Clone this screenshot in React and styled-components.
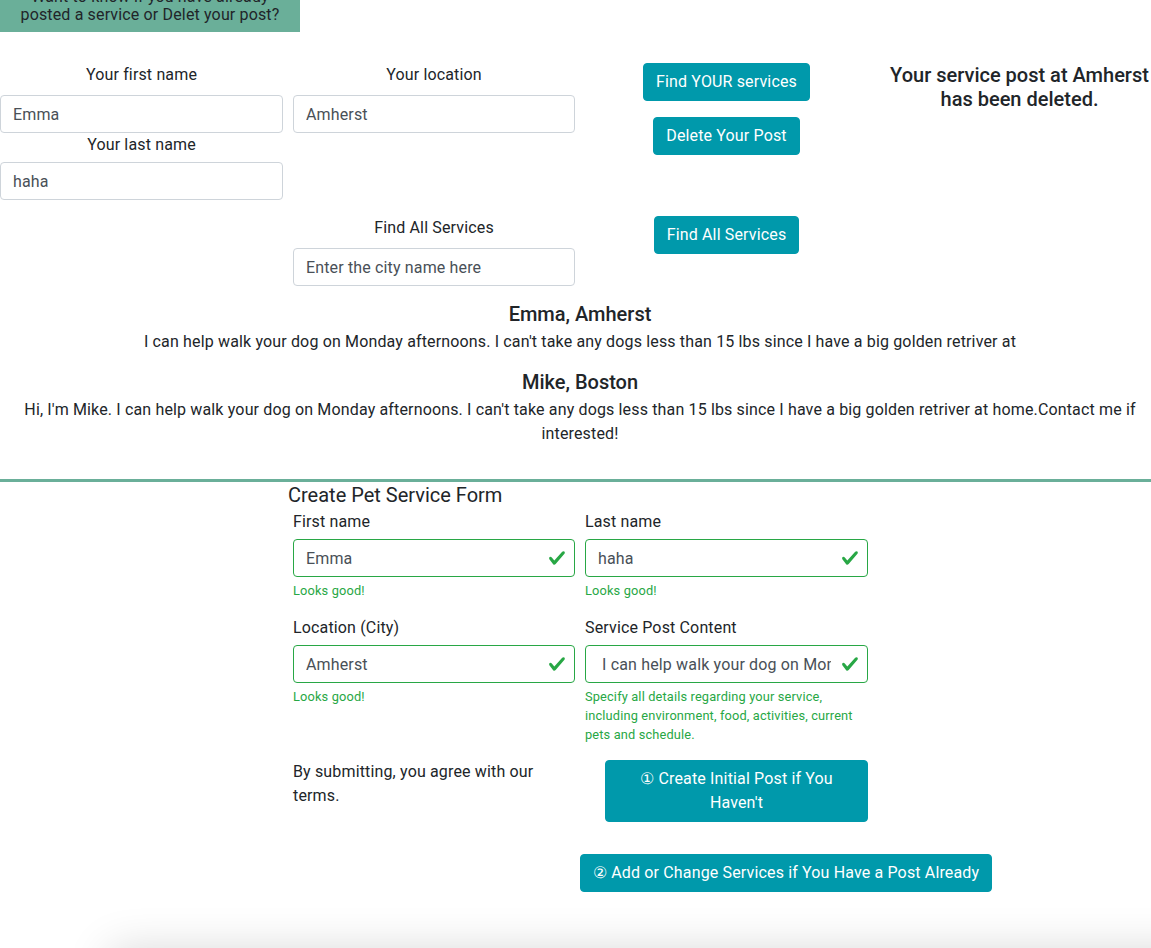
import React from "react";
import styled, { createGlobalStyle } from "styled-components";

const FONT = `Roboto, "Helvetica Neue", Arial, "Noto Sans", sans-serif`;

const Global = createGlobalStyle`
  html, body { margin: 0; padding: 0; background: #fff; }
  body {
    font-family: ${FONT};
    font-size: 16px;
    line-height: 1.5;
    letter-spacing: 0.15px;
    color: #212529;
    overflow: hidden;
  }
  * { box-sizing: border-box; }
`;

const Page = styled.div`
  width: 1151px;
  height: 948px;
  overflow: hidden;
  position: relative;
`;

const Banner = styled.div`
  width: 300px;
  margin-top: -19px;
  padding: 7px 10px 8px;
  background: #6aaf99;
  color: #212529;
  text-align: center;
  font-size: 16px;
  line-height: 18px;
`;

const Grid = styled.div`
  display: grid;
  grid-template-columns: 283px 282px 283px 283px;
  column-gap: 10px;
  margin-top: ${(p) => p.$top || 0}px;
`;

const Col = styled.div`
  display: flex;
  flex-direction: column;
  align-items: ${(p) => (p.$center ? "center" : "stretch")};
  gap: ${(p) => p.$gap || 0}px;
`;

const Label = styled.label`
  display: block;
  text-align: ${(p) => (p.$left ? "left" : "center")};
  line-height: 24px;
  margin-bottom: ${(p) => (p.$mb !== undefined ? p.$mb : 8)}px;
`;

const Input = styled.input`
  display: block;
  width: 100%;
  height: 38px;
  padding: 6px 12px;
  font-family: ${FONT};
  font-size: 16px;
  line-height: 24px;
  letter-spacing: 0.15px;
  color: #495057;
  background: #fff;
  border: 1px solid ${(p) => (p.$valid ? "#28a745" : "#ced4da")};
  border-radius: 4px;
  padding-right: ${(p) => (p.$valid ? 36 : 12)}px;
  outline: none;
  &::placeholder { color: #495057; opacity: 1; }
`;

const Button = styled.button`
  display: inline-block;
  font-family: ${FONT};
  font-size: 16px;
  font-weight: 400;
  line-height: 24px;
  letter-spacing: 0.15px;
  color: #fff;
  background: #0099ab;
  border: 1px solid #0099ab;
  border-radius: 4px;
  padding: 6px 12px;
  text-align: center;
  cursor: pointer;
`;

const Notice = styled.h5`
  margin: 0;
  font-size: 20px;
  font-weight: 500;
  line-height: 24px;
  letter-spacing: 0;
  text-align: center;
`;

const Posts = styled.div`
  width: 1160px;
  margin-top: 16px;
  padding: 0 15px;
  text-align: center;
`;

const PostTitle = styled.h5`
  margin: 0 0 4px;
  font-size: 20px;
  font-weight: 500;
  line-height: 24px;
  letter-spacing: 0;
`;

const PostBody = styled.p`
  margin: 0 0 16px;
  line-height: 24px;
  &:last-child { margin-bottom: 0; }
`;

const Divider = styled.hr`
  margin: 33px 0 0;
  border: 0;
  height: 3px;
  background: #6aaf99;
`;

const Form = styled.form`
  margin-left: 293px;
  width: 575px;
`;

const FormTitle = styled.h5`
  margin: 1px 0 3px -5px;
  font-size: 20px;
  font-weight: 400;
  line-height: 24px;
  letter-spacing: 0;
`;

const FormGrid = styled.div`
  display: grid;
  grid-template-columns: 282px 283px;
  column-gap: 10px;
  row-gap: 16px;
`;

const Field = styled.div``;

const InputWrap = styled.div`
  position: relative;
`;

const Check = styled.svg`
  position: absolute;
  right: 9px;
  top: 10px;
  width: 18px;
  height: 18px;
`;

const Feedback = styled.div`
  margin-top: 4px;
  font-size: 12.8px;
  line-height: 19px;
  color: #28a745;
`;

const Terms = styled.p`
  margin: 0;
  line-height: 24px;
  padding-right: 30px;
`;

const CreateButton = styled(Button)`
  margin-left: 20px;
  width: 263px;
`;

const AddButton = styled(Button)`
  margin: 32px 0 0 287px;
  white-space: nowrap;
`;

const Shade = styled.div`
  position: absolute;
  left: 110px;
  right: -60px;
  top: 958px;
  height: 60px;
  box-shadow: 0 -8px 45px rgba(0, 0, 0, 0.16);
  background: #eee;
`;

const CheckIcon = () => (
  <Check viewBox="0 0 8 8">
    <path
      fill="#28a745"
      d="M2.3 6.73L.6 4.53c-.4-1.04.46-1.4 1.1-.8l1.1 1.4 3.4-3.8c.6-.63 1.6-.27 1.2.7l-4 4.6c-.43.5-.8.4-1.1.1z"
    />
  </Check>
);

const ValidInput = ({ value }) => (
  <InputWrap>
    <Input $valid defaultValue={value} />
    <CheckIcon />
  </InputWrap>
);

export default function App() {
  return (
    <Page>
      <Global />
      <Banner>Want to know if you have already posted a service or Delet your post?</Banner>

      <Grid $top={31}>
        <Col>
          <Label>Your first name</Label>
          <Input defaultValue="Emma" />
          <Label $mb={5}>Your last name</Label>
          <Input defaultValue="haha" />
        </Col>
        <Col>
          <Label>Your location</Label>
          <Input defaultValue="Amherst" />
        </Col>
        <Col $center $gap={16}>
          <Button>Find YOUR services</Button>
          <Button>Delete Your Post</Button>
        </Col>
        <Col>
          <Notice>Your service post at Amherst has been deleted.</Notice>
        </Col>
      </Grid>

      <Grid $top={16}>
        <Col />
        <Col>
          <Label>Find All Services</Label>
          <Input placeholder="Enter the city name here" />
        </Col>
        <Col $center>
          <Button>Find All Services</Button>
        </Col>
        <Col />
      </Grid>

      <Posts>
        <PostTitle>Emma, Amherst</PostTitle>
        <PostBody>
          I can help walk your dog on Monday afternoons. I can't take any dogs less than 15 lbs since I have a big golden retriver at
        </PostBody>
        <PostTitle>Mike, Boston</PostTitle>
        <PostBody>
          Hi, I'm Mike. I can help walk your dog on Monday afternoons. I can't take any dogs less than 15 lbs since I have a big golden retriver at home.Contact me if interested!
        </PostBody>
      </Posts>

      <Divider />

      <Form onSubmit={(e) => e.preventDefault()}>
        <FormTitle>Create Pet Service Form</FormTitle>
        <FormGrid>
          <Field>
            <Label $left $mb={5}>First name</Label>
            <ValidInput value="Emma" />
            <Feedback>Looks good!</Feedback>
          </Field>
          <Field>
            <Label $left $mb={5}>Last name</Label>
            <ValidInput value="haha" />
            <Feedback>Looks good!</Feedback>
          </Field>
          <Field>
            <Label $left $mb={5}>Location (City)</Label>
            <ValidInput value="Amherst" />
            <Feedback>Looks good!</Feedback>
          </Field>
          <Field>
            <Label $left $mb={5}>Service Post Content</Label>
            <ValidInput value=" I can help walk your dog on Monday afternoons. I can't take any dogs less than 15 lbs" />
            <Feedback>
              Specify all details regarding your service, including environment, food, activities, current pets and schedule.
            </Feedback>
          </Field>
          <Field>
            <Terms>By submitting, you agree with our terms.</Terms>
          </Field>
          <Field>
            <CreateButton type="button">① Create Initial Post if You Haven't</CreateButton>
          </Field>
        </FormGrid>
        <AddButton type="button">② Add or Change Services if You Have a Post Already</AddButton>
      </Form>

      <Shade />
    </Page>
  );
}
